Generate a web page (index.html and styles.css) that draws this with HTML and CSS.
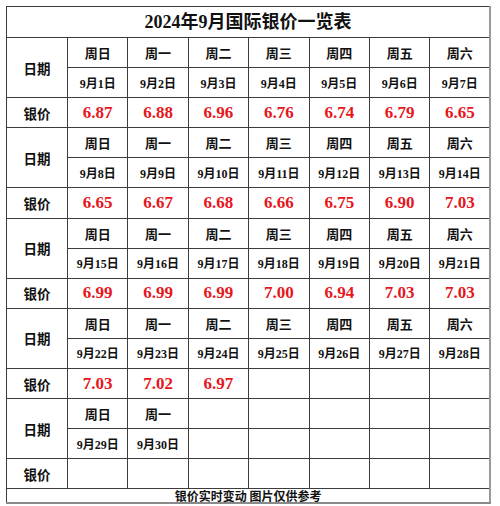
FILE: index.html
```html
<!DOCTYPE html>
<html lang="zh-CN">
<head>
<meta charset="utf-8">
<title>2024年9月国际银价一览表</title>
<link rel="stylesheet" href="styles.css">
</head>
<body>
<div class="page">
<table class="sheet">
  <colgroup>
    <col class="c-label">
    <col class="c-day"><col class="c-day"><col class="c-day"><col class="c-day"><col class="c-day"><col class="c-day"><col class="c-day">
  </colgroup>
  <tr class="r-title"><td colspan="8" class="title">2024年9月国际银价一览表</td></tr>

  <tr class="r"><td rowspan="2" class="label">日期</td><td class="wk">周日</td><td class="wk">周一</td><td class="wk">周二</td><td class="wk">周三</td><td class="wk">周四</td><td class="wk">周五</td><td class="wk">周六</td></tr>
  <tr class="r"><td class="date">9月1日</td><td class="date">9月2日</td><td class="date">9月3日</td><td class="date">9月4日</td><td class="date">9月5日</td><td class="date">9月6日</td><td class="date">9月7日</td></tr>
  <tr class="r"><td class="label">银价</td><td class="price">6.87</td><td class="price">6.88</td><td class="price">6.96</td><td class="price">6.76</td><td class="price">6.74</td><td class="price">6.79</td><td class="price">6.65</td></tr>

  <tr class="r"><td rowspan="2" class="label">日期</td><td class="wk">周日</td><td class="wk">周一</td><td class="wk">周二</td><td class="wk">周三</td><td class="wk">周四</td><td class="wk">周五</td><td class="wk">周六</td></tr>
  <tr class="r"><td class="date">9月8日</td><td class="date">9月9日</td><td class="date">9月10日</td><td class="date">9月11日</td><td class="date">9月12日</td><td class="date">9月13日</td><td class="date">9月14日</td></tr>
  <tr class="r"><td class="label">银价</td><td class="price">6.65</td><td class="price">6.67</td><td class="price">6.68</td><td class="price">6.66</td><td class="price">6.75</td><td class="price">6.90</td><td class="price">7.03</td></tr>

  <tr class="r"><td rowspan="2" class="label">日期</td><td class="wk">周日</td><td class="wk">周一</td><td class="wk">周二</td><td class="wk">周三</td><td class="wk">周四</td><td class="wk">周五</td><td class="wk">周六</td></tr>
  <tr class="r"><td class="date">9月15日</td><td class="date">9月16日</td><td class="date">9月17日</td><td class="date">9月18日</td><td class="date">9月19日</td><td class="date">9月20日</td><td class="date">9月21日</td></tr>
  <tr class="r"><td class="label">银价</td><td class="price">6.99</td><td class="price">6.99</td><td class="price">6.99</td><td class="price">7.00</td><td class="price">6.94</td><td class="price">7.03</td><td class="price">7.03</td></tr>

  <tr class="r"><td rowspan="2" class="label">日期</td><td class="wk">周日</td><td class="wk">周一</td><td class="wk">周二</td><td class="wk">周三</td><td class="wk">周四</td><td class="wk">周五</td><td class="wk">周六</td></tr>
  <tr class="r"><td class="date">9月22日</td><td class="date">9月23日</td><td class="date">9月24日</td><td class="date">9月25日</td><td class="date">9月26日</td><td class="date">9月27日</td><td class="date">9月28日</td></tr>
  <tr class="r"><td class="label">银价</td><td class="price">7.03</td><td class="price">7.02</td><td class="price">6.97</td><td></td><td></td><td></td><td></td></tr>

  <tr class="r"><td rowspan="2" class="label">日期</td><td class="wk">周日</td><td class="wk">周一</td><td></td><td></td><td></td><td></td><td></td></tr>
  <tr class="r"><td class="date">9月29日</td><td class="date">9月30日</td><td></td><td></td><td></td><td></td><td></td></tr>
  <tr class="r"><td class="label">银价</td><td></td><td></td><td></td><td></td><td></td><td></td><td></td></tr>

  <tr class="r-foot"><td colspan="8" class="foot">银价实时变动 图片仅供参考</td></tr>
</table>
</div>
</body>
</html>
```

FILE: styles.css
```css
html, body {
  margin: 0;
  padding: 0;
  background: #ffffff;
}

.page {
  width: 500px;
  height: 506px;
  padding: 6px 0 0 6px;
  box-sizing: border-box;
}

.sheet {
  border-collapse: collapse;
  table-layout: fixed;
  width: 484px;
  font-family: "Liberation Serif", "Noto Sans CJK SC", serif;
  color: #111;
  border-top: 1px solid #444;
  border-left: 1px solid #444;
  border-right: 2px solid #9a9a9a;
  border-bottom: 2px solid #8a8a8a;
}

.c-label { width: 61px; }
.c-day { width: 60.4px; }

.sheet td {
  border: 1px solid #3c3c3c;
  padding: 0;
  text-align: center;
  vertical-align: middle;
  font-weight: bold;
  white-space: nowrap;
}

.r-title td { height: 30px; }
.r td { height: 29.1px; }
.r-foot td { height: 13px; }

.title {
  font-size: 18px;
  line-height: 20px;
  padding-top: 1px;
}

.label {
  font-family: "Noto Sans CJK SC", sans-serif;
  font-size: 13.5px;
}

.wk {
  font-family: "Noto Sans CJK SC", sans-serif;
  font-size: 13px;
}

.date {
  font-size: 12px;
}

.price {
  font-size: 17px;
  color: #e6161c;
}

.sheet .foot {
  font-family: "Noto Sans CJK SC", sans-serif;
  font-size: 12px;
  line-height: 13px;
  border-top: 1px solid #222;
}
```
